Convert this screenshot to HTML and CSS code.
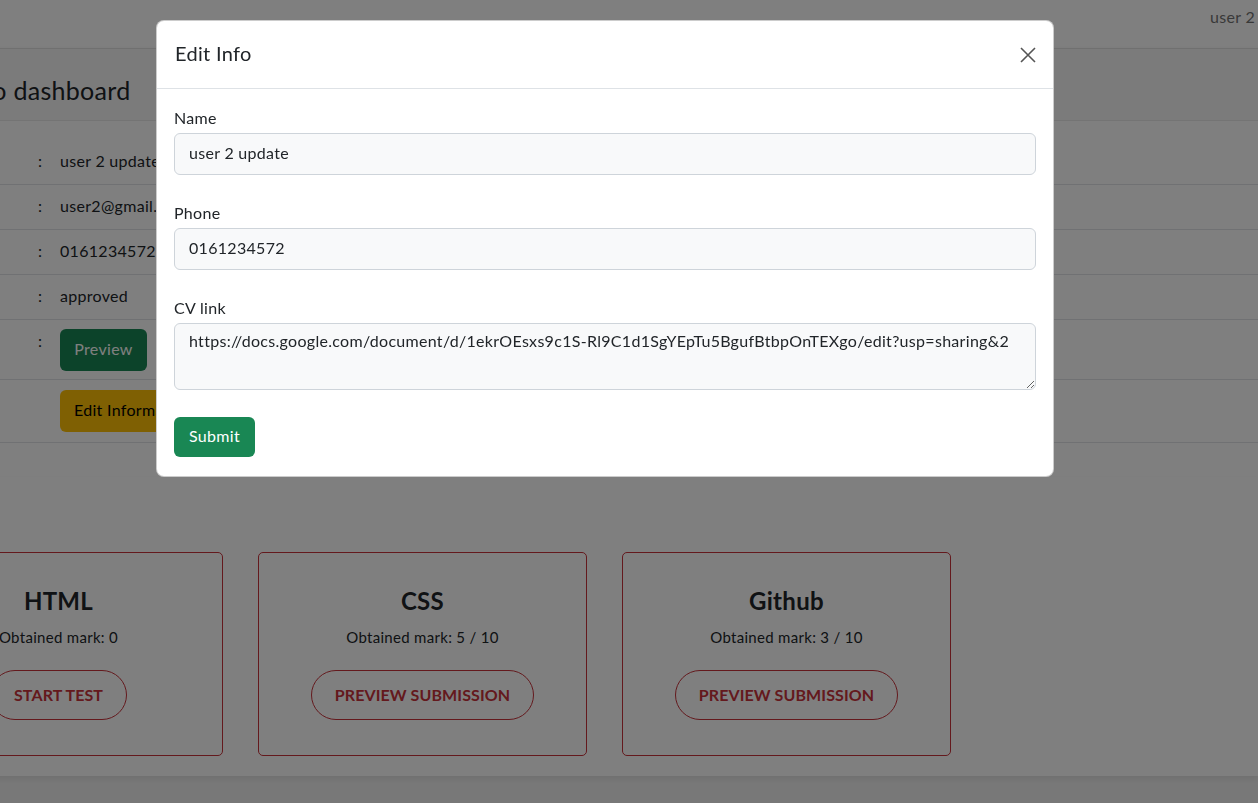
FILE: index.html
```html
<!DOCTYPE html>
<html lang="en">
<head>
<meta charset="utf-8">
<title>Dashboard</title>
<link rel="stylesheet" href="styles.css">
</head>
<body>
<nav class="navbar">
  <span class="nav-user">user 2 update</span>
</nav>
<div class="page">
  <section class="info-card">
    <div class="info-header"><h2>Welcome to dashboard</h2></div>
    <div class="info-body">
      <div class="info-row"><span class="k">Name</span><span class="c">:</span><span class="v">user 2 update</span></div>
      <div class="info-row"><span class="k">Email</span><span class="c">:</span><span class="v">user2@gmail.com</span></div>
      <div class="info-row"><span class="k">Phone</span><span class="c">:</span><span class="v">0161234572</span></div>
      <div class="info-row"><span class="k">Status</span><span class="c">:</span><span class="v">approved</span></div>
      <div class="info-row row-tight"><span class="k">CV</span><span class="c">:</span><span class="v"><button class="btn btn-green">Preview</button></span></div>
      <div class="info-row row-btn"><span class="k"></span><span class="c"></span><span class="v"><button class="btn btn-yellow">Edit Information</button></span></div>
    </div>
  </section>
  <section class="tests">
    <div class="test-card">
      <h3>HTML</h3>
      <p>Obtained mark: 0</p>
      <button class="pill">Start test</button>
    </div>
    <div class="test-card">
      <h3>CSS</h3>
      <p>Obtained mark: 5 / 10</p>
      <button class="pill">Preview submission</button>
    </div>
    <div class="test-card">
      <h3>Github</h3>
      <p>Obtained mark: 3 / 10</p>
      <button class="pill">Preview submission</button>
    </div>
  </section>
</div>

<div class="backdrop"></div>
<div class="modal">
  <div class="modal-header">
    <h5>Edit Info</h5>
    <button class="close" aria-label="Close">
      <svg width="16" height="16" viewBox="0 0 16 16"><path d="M1 1 L15 15 M15 1 L1 15" stroke="#555" stroke-width="1.6" fill="none"/></svg>
    </button>
  </div>
  <form class="modal-body">
    <div class="group">
      <label>Name</label>
      <input class="field" type="text" value="user 2 update">
    </div>
    <div class="group">
      <label>Phone</label>
      <input class="field" type="text" value="0161234572">
    </div>
    <div class="group">
      <label>CV link</label>
      <textarea class="field area">https://docs.google.com/document/d/1ekrOEsxs9c1S-Rl9C1d1SgYEpTu5BgufBtbpOnTEXgo/edit?usp=sharing&amp;2</textarea>
    </div>
    <button type="button" class="submit">Submit</button>
  </form>
</div>
</body>
</html>
```
FILE: styles.css
```css
* { box-sizing: border-box; }
html, body { margin: 0; padding: 0; }
body {
  font-family: "Lato", "Noto Sans", sans-serif;
  font-size: 16px;
  line-height: 24px;
  letter-spacing: 0.3px;
  color: #212529;
  background: #f1f1f1;
  overflow: hidden;
  height: 803px;
}
button, input, textarea { letter-spacing: 0.3px; }
.navbar {
  height: 49px;
  background: #fff;
  display: flex;
  justify-content: flex-end;
  align-items: flex-start;
  padding: 5px 0 0 0;
  border-bottom: 1px solid #e6e6e6;
  box-shadow: 0 1px 2px rgba(0,0,0,0.08);
  overflow: hidden;
}
.nav-user { color: #737373; font-size: 16px; white-space: nowrap; margin-right: -52px; }
.page { margin-left: -200px; }
.info-card {
  background: #fff;
  box-shadow: 0 3px 8px rgba(0,0,0,0.12);
  padding-bottom: 34px;
}
.info-header {
  height: 72px;
  background: #f6f6f6;
  border-bottom: 1px solid #e9e9e9;
  display: flex;
  align-items: center;
  padding-left: 71px;
}
.info-header h2 { margin: 0; font-size: 25px; font-weight: 400; color: #212529; padding-top: 10px; white-space: nowrap; }
.info-body { padding-top: 19px; }
.info-row {
  display: grid;
  grid-template-columns: 158px 22px 1fr;
  padding: 9px 0 11px 80px;
  border-bottom: 1px solid #e0e3e6;
  align-items: start;
  min-height: 45px;
}
.info-row.row-tight { padding: 9px 0 8px 80px; }
.info-row.row-btn { padding: 10px 0 10px 80px; }
.k { color: #212529; }
.c { color: #212529; }
.v { white-space: nowrap; }
.btn {
  font-family: inherit;
  font-size: 16px;
  line-height: 24px;
  height: 42px;
  padding: 0 14px 2px;
  border: none;
  border-radius: 6px;
}
.btn-green { background: #198754; color: #fff; width: 87px; }
.btn-yellow { background: #ffc107; color: #000; }
.tests {
  background: #fff;
  display: flex;
  gap: 35px;
  padding: 75px 0 20px 94px;
  box-shadow: 0 3px 6px rgba(0,0,0,0.08);
}
.test-card {
  width: 329px;
  border: 1px solid #c8323a;
  border-radius: 5px;
  padding: 33px 10px 35px;
  text-align: center;
}
.test-card h3 { margin: 0; font-size: 24px; line-height: 29px; font-weight: 700; color: #212529; }
.test-card p { margin: 10px 0 21px; font-size: 15px; line-height: 24px; color: #212529; }
.pill {
  font-family: inherit;
  height: 50px;
  padding: 0 23px 2px;
  border: 1px solid #c8323a;
  border-radius: 25px;
  background: transparent;
  color: #c8323a;
  font-size: 16px;
  font-weight: 700;
  text-transform: uppercase;
  letter-spacing: 0.1px;
}
.backdrop {
  position: fixed;
  inset: 0;
  background: rgba(0,0,0,0.5);
}
.modal {
  position: fixed;
  left: 156px;
  top: 20px;
  width: 898px;
  background: #fff;
  border-radius: 8px;
  border: 1px solid rgba(0,0,0,0.2);
}
.modal-header {
  height: 68px;
  display: flex;
  align-items: center;
  justify-content: space-between;
  padding: 0 16px 4px 18px;
  border-bottom: 1px solid #dee2e6;
}
.modal-header h5 { margin: 0; font-size: 20px; font-weight: 400; line-height: 30px; color: #212529; }
.close {
  background: none;
  border: none;
  padding: 0;
  width: 18px;
  height: 18px;
  display: flex;
  align-items: center;
  justify-content: center;
  margin-top: 5px;
}
.modal-body { padding: 17px 17px 19px 17px; }
.group { margin-bottom: 26px; }
.group label { display: block; margin-bottom: 3px; font-size: 16px; color: #212529; }
.field {
  display: block;
  width: 100%;
  height: 42px;
  padding: 0 14px 3px;
  font-family: inherit;
  font-size: 16px;
  color: #212529;
  background: #f8f9fa;
  border: 1px solid #ced4da;
  border-radius: 6px;
}
.area {
  height: 67px;
  padding: 5px 14px;
  line-height: 24px;
  resize: vertical;
}
.group:last-of-type { margin-bottom: 27px; }
.submit {
  font-family: inherit;
  font-size: 16px;
  height: 40px;
  padding: 0 15px 3px;
  background: #198754;
  color: #fff;
  border: none;
  border-radius: 6px;
}
```
